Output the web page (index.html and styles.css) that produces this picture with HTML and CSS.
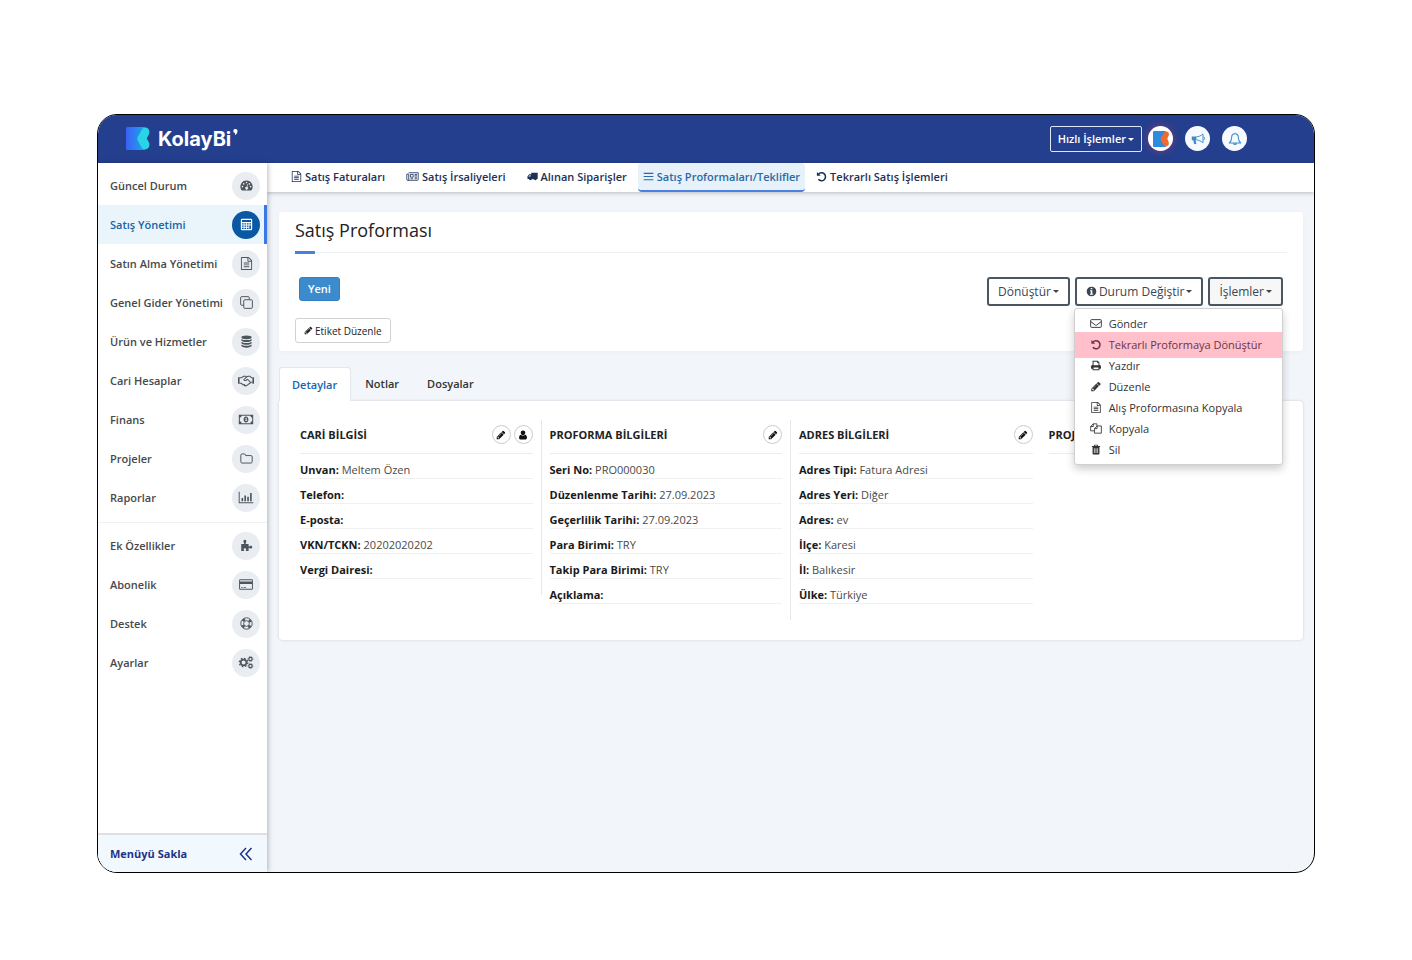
FILE: index.html
```html
<!DOCTYPE html>
<html lang="tr">
<head>
<meta charset="utf-8">
<meta name="viewport" content="width=device-width, initial-scale=1">
<title>KolayBi – Satış Proforması</title>
<link rel="stylesheet" href="styles.css">
</head>
<body>
<svg class="sprite" aria-hidden="true">
  <symbol id="pencil" viewBox="0 0 1792 1792"><path d="M491 1536l91-91-235-235-91 91v107h128v128h107zM1014 608q0-22-22-22-10 0-17 7l-542 542q-7 7-7 17 0 22 22 22 10 0 17-7l542-542q7-7 7-17zM960 416l416 416-832 832h-416v-416zM1643 512q0 53-37 90l-166 166-416-416 166-165q36-38 90-38 53 0 91 38l235 234q37 39 37 91z"/></symbol>
  <symbol id="file" viewBox="0 0 1792 1792"><path d="M1596 380q28 28 48 76t20 88v1152q0 40-28 68t-68 28h-1344q-40 0-68-28t-28-68v-1600q0-40 28-68t68-28h896q40 0 88 20t76 48zM1152 136v376h376q-10-29-22-41l-313-313q-12-12-41-22zM1536 1664v-1024h-416q-40 0-68-28t-28-68v-416h-768v1536h1280zM512 800q0-14 9-23t23-9h704q14 0 23 9t9 23v64q0 14-9 23t-23 9h-704q-14 0-23-9t-9-23v-64zM1248 1024q14 0 23 9t9 23v64q0 14-9 23t-23 9h-704q-14 0-23-9t-9-23v-64q0-14 9-23t23-9h704zM1248 1280q14 0 23 9t9 23v64q0 14-9 23t-23 9h-704q-14 0-23-9t-9-23v-64q0-14 9-23t23-9h704z"/></symbol>
  <symbol id="gauge" viewBox="0 0 16 16"><path fill-rule="evenodd" d="M8 2a7.500 7.500 0 0 0-6.300 11.600c.2.3.4.4.7.4h11.200c.3 0 .5-.1.7-.4A7.500 7.500 0 0 0 8 2zM3 8.400a1 1 0 1 1 0 2 1 1 0 0 1 0-2zM4.500 5a1 1 0 1 1 0 2 1 1 0 0 1 0-2zM8 3.400a1 1 0 1 1 0 2 1 1 0 0 1 0-2zM11.500 5a1 1 0 1 1 0 2 1 1 0 0 1 0-2zM13 8.400a1 1 0 1 1 0 2 1 1 0 0 1 0-2zM9.200 6l.7.200-.9 3.600a1.700 1.700 0 1 1-.8-.200z"/></symbol>
  <symbol id="calc" viewBox="0 0 16 16"><path fill-rule="evenodd" d="M2.500 1h11A1.500 1.500 0 0 1 15 2.500v11a1.500 1.500 0 0 1-1.500 1.500h-11A1.500 1.500 0 0 1 1 13.500v-11A1.500 1.500 0 0 1 2.500 1zM2.500 2.500v2.500h11V2.500zM2.500 6.500v1.600h2V6.500zM5.500 6.500v1.600h2V6.500zM8.500 6.500v1.600h2V6.500zM11.500 6.500v1.600h2V6.500zM2.500 9.200v1.600h2V9.200zM5.500 9.200v1.600h2V9.200zM8.500 9.200v1.600h2V9.200zM2.500 12v1.600h2V12zM5.500 12v1.600h2V12zM8.500 12v1.600h2V12zM11.500 9.200v4.400h2V9.200z"/></symbol>
  <symbol id="clone" viewBox="0 0 16 16"><g fill="none" stroke="currentColor" stroke-width="1.200"><rect x="4.600" y="4.600" width="10.600" height="10.600" rx="1.200"/><path d="M4.600 11.400H2A1.200 1.200 0 0 1 .8 10.200V2A1.200 1.200 0 0 1 2 .8h8.200A1.200 1.200 0 0 1 11.400 2v2.600"/></g></symbol>
  <symbol id="database" viewBox="0 0 16 16"><ellipse cx="8" cy="2.900" rx="6.300" ry="2.400"/><path d="M1.700 4.800c2 2 10.600 2 12.600 0v1.700c0 3-12.600 3-12.600 0zM1.700 8.200c2 2 10.600 2 12.600 0v1.700c0 3-12.600 3-12.600 0zM1.700 11.600c2 2 10.600 2 12.600 0v1.700c0 3-12.600 3-12.600 0z"/></symbol>
  <symbol id="shake" viewBox="0 0 20 16"><path d="M0 4h2v8H0zM18 4h2v8h-2z"/><path fill="none" stroke="currentColor" stroke-width="1.300" stroke-linejoin="round" d="M2 4.500h2.500L7 2.700h2.500L11 3.500l1.500-.8H15l1.800 1.800H18M2 11.500h1.700l4.800 3 1.800.2 5.700-4.200 2-.5M11 3.500L7.300 6.800c.5 1.800 2.300 1.500 3.700.3l1-.6 4 4M9 14.200l-1.300-1.200"/></symbol>
  <symbol id="money" viewBox="0 0 20 16"><path fill-rule="evenodd" d="M1 2h18v12H1zM4.500 3.300a2.500 2.500 0 0 1-2.200 2.400v4.600a2.500 2.500 0 0 1 2.200 2.400h11a2.500 2.500 0 0 1 2.200-2.400V5.700a2.500 2.500 0 0 1-2.200-2.400zM10 4.300c2 0 3 1.700 3 3.700s-1 3.700-3 3.700S7 10 7 8s1-3.700 3-3.700zM9 6.800l.6.500v1.900h-.9v.8h2.800v-.8h-.8V5.900h-.6z"/></symbol>
  <symbol id="folder" viewBox="0 0 16 16"><path fill="none" stroke="currentColor" stroke-width="1.200" d="M1 4a1.600 1.600 0 0 1 1.600-1.600h2.600A1.600 1.600 0 0 1 6.800 4v.4h6.600A1.600 1.600 0 0 1 15 6v6a1.600 1.600 0 0 1-1.600 1.600H2.600A1.600 1.600 0 0 1 1 12z"/></symbol>
  <symbol id="chart" viewBox="0 0 18 16"><path d="M0 1h1.200v12.800H18V15H0zM3.500 8.500h2v4h-2zM7 5.500h2v7H7zM10.500 7h2v5.500h-2zM14 2.500h2v10h-2z"/></symbol>
  <symbol id="puzzle" viewBox="0 0 16 16"><path d="M1.500 6h3.200c.6 0 .5-.8.100-1.300C3.500 3 4.300 1 6 1s2.500 2 1.200 3.700c-.4.500-.3 1.300.3 1.300h3.100v2.800c0 .6.700.6 1.300.100 1.300-1 3.100-.4 3.100 1.200s-1.800 2.200-3.100 1.200c-.6-.5-1.300-.4-1.300.2v3.200H7.600c-.6 0-.6-.7-.2-1.200.7-1 .1-2-1.300-2s-2 1-1.300 2c.4.500.4 1.200-.3 1.200h-3z"/></symbol>
  <symbol id="card" viewBox="0 0 18 16"><path fill-rule="evenodd" d="M2 1.500h14A1.500 1.500 0 0 1 17.500 3v10a1.500 1.500 0 0 1-1.500 1.500H2A1.500 1.500 0 0 1 .5 13V3A1.500 1.500 0 0 1 2 1.500zM1.700 2.700v1.600h14.600V2.700zM1.700 7.500v5.800h14.600V7.500zM3 11h2v1H3zM6 11h3v1H6z"/></symbol>
  <symbol id="ring" viewBox="0 0 16 16"><g fill="none" stroke="currentColor"><circle cx="8" cy="8" r="7" stroke-width="1.200"/><circle cx="8" cy="8" r="3.500" stroke-width="1.200"/><circle cx="8" cy="8" r="5.300" stroke-width="3" stroke-dasharray="3.300 5.030" stroke-dashoffset="-2.500"/></g></symbol>
  <symbol id="gears" viewBox="0 0 18 16"><g fill="none" stroke="currentColor"><circle cx="6" cy="8" r="3.500" stroke-width="2"/><circle cx="6" cy="8" r="5.200" stroke-width="1.600" stroke-dasharray="2 2.080"/><circle cx="14.500" cy="3.700" r="2" stroke-width="1.400"/><circle cx="14.500" cy="3.700" r="3" stroke-width="1" stroke-dasharray="1.200 1.156"/><circle cx="14.500" cy="12.300" r="2" stroke-width="1.400"/><circle cx="14.500" cy="12.300" r="3" stroke-width="1" stroke-dasharray="1.200 1.156"/></g></symbol>
  <symbol id="news" viewBox="0 0 18 16"><path fill="none" stroke="currentColor" stroke-width="1.200" d="M3.500 2.500h13.800v10a1 1 0 0 1-1 1H2a1.300 1.300 0 0 1-1.300-1.300V4.500h2.800v7.700A1.300 1.300 0 0 1 2 13.500"/><path fill="none" stroke="currentColor" stroke-width="1.200" d="M6 5h4v4H6zM12 5h3.500M12 7h3.500M12 9h3.500M6 11.300h4M12 11.300h3.500"/></symbol>
  <symbol id="truck" viewBox="0 0 18 16"><path fill-rule="evenodd" d="M7 2h10.500v10H16a2.200 2.200 0 0 1-4.300.4H7.500A2.200 2.200 0 0 1 3.200 12H.8V7.500L3.600 4.500H7zM2.200 8H5.800V5.800H4.200z"/></symbol>
  <symbol id="bars" viewBox="0 0 16 16"><path d="M1 2.500h14v1.700H1zM1 7.200h14v1.700H1zM1 11.900h14v1.700H1z"/></symbol>
  <symbol id="undo" viewBox="0 0 16 16"><path fill="none" stroke="currentColor" stroke-width="2.200" d="M3.600 4.600A5.800 5.800 0 1 1 3.500 12"/><path d="M1.300 1.300v5.600h5.600z"/></symbol>
  <symbol id="mail" viewBox="0 0 18 16"><path fill="none" stroke="currentColor" stroke-width="1.400" stroke-linejoin="round" d="M2.200 2.200h13.600A1.200 1.200 0 0 1 17 3.400v9.200a1.200 1.200 0 0 1-1.200 1.200H2.200A1.200 1.200 0 0 1 1 12.600V3.400a1.200 1.200 0 0 1 1.200-1.200zM1 5l6.500 5c1 .8 2 .8 3 0L17 5"/></symbol>
  <symbol id="print" viewBox="0 0 16 16"><path fill-rule="evenodd" d="M3 1h7.500L13 3.500v3.600c1.300 0 2.200.9 2.200 2.200v3.500H13V15H3v-2.200H.8V9.300c0-1.300.9-2.200 2.200-2.200zM4.400 2.400v5.400h7.200V4.500H9.700V2.400zM4.400 10.800v2.800h7.200v-2.800z"/></symbol>
  <symbol id="copy" viewBox="0 0 18 16"><path fill="none" stroke="currentColor" stroke-width="1.300" stroke-linejoin="round" d="M6.500 11.500H1V5l3.800-4h5.500v3M5 1v4H1M10.500 4.200H17V15H6.700V8.200zM10.700 4.200v4h-4"/></symbol>
  <symbol id="trash" viewBox="0 0 16 16"><path fill-rule="evenodd" d="M5.500 1h5l.7 2H14v1.500h-1V14a1.200 1.200 0 0 1-1.200 1.200H4.200A1.200 1.200 0 0 1 3 14V4.500H2V3h2.800zM6.300 2.200L6 3h4l-.3-.8zM5 6v7h1V6zM7.500 6v7h1V6zM10 6v7h1V6z"/></symbol>
  <symbol id="user" viewBox="0 0 16 16"><circle cx="8" cy="4.500" r="3.700"/><path d="M4.600 7.500c2 1.800 4.800 1.800 6.800 0 2 .3 2.900 2.500 2.900 5 0 1.500-.8 2.500-2 2.500H3.700c-1.200 0-2-1-2-2.500 0-2.500.9-4.700 2.900-5z"/></symbol>
  <symbol id="info" viewBox="0 0 16 16"><path fill-rule="evenodd" d="M8 1a7 7 0 1 1 0 14A7 7 0 0 1 8 1zM6.900 2.800v2h2.300v-2zM5.800 6v1.500h1.100v3.700H5.800v1.500h4.600v-1.500H9.200V6z"/></symbol>
  <symbol id="horn" viewBox="0 0 18 16"><path d="M1 4.700h6v5H5.900l1 4.300c-1 .8-2.200.8-3 .2L3 9.700H1z"/><path fill="none" stroke="currentColor" stroke-width="1.200" stroke-linejoin="round" d="M7 5.200c3 0 6-1.500 8.400-3.700v11.400C13 10.700 10 9.300 7 9.200M16 5.500a1.700 1.700 0 0 1 0 3.400"/></symbol>
  <symbol id="bell" viewBox="0 0 16 16"><path fill="none" stroke="currentColor" stroke-width="1.200" stroke-linejoin="round" d="M8 2C5.500 2 4.200 4 4.200 6c0 3.500-1 5.200-2.700 6.500h13C12.800 11.200 11.800 9.500 11.800 6c0-2-1.300-4-3.800-4zM8 2V.8M6.500 12.800c0 2 3 2 3 0"/></symbol>
  <symbol id="chevrons" viewBox="0 0 14 14"><path fill="none" stroke="currentColor" stroke-width="1.500" d="M7 1L1.500 7 7 13M12.500 1L7 7l5.500 6"/></symbol>
</svg>

<div class="app">
  <header class="topbar">
    <a class="brand" href="#">
      <svg class="brand-mark" viewBox="0 0 24 23" aria-hidden="true">
        <defs><linearGradient id="markFill"><stop offset="0" stop-color="#3d60f4"/><stop offset="1" stop-color="#1ca6ee"/></linearGradient></defs>
        <path fill="url(#markFill)" d="M1.500 0H19l-7 11.500L19 23H1.500A1.500 1.500 0 0 1 0 21.500v-20A1.500 1.500 0 0 1 1.500 0z"/>
        <path fill="#2bd3e6" d="M19 .5c3.800 0 5.200 3.500 4 6.500-.4 1.300-1.500 3-2.300 4.500.8 1.300 1.900 2.800 2.400 4.200 1.100 3.500-.6 6.800-4.100 6.800-2 0-2.800-1-3.800-2.800l-3.200-5.700c-1-1.600-1-2.800 0-4.400l3.400-6C16.400 1.300 17.400.5 19 .5z"/>
      </svg>
      <span class="brand-name">KolayBi</span><svg class="brand-tick" viewBox="0 0 5 6" aria-hidden="true"><path fill="#fff" d="M2.500 0a2 2 0 0 1 2 2.200C4.400 4 3.300 5.500 1.800 6l.3-2A2 2 0 0 1 2.500 0z"/></svg>
    </a>
    <div class="top-actions">
      <button class="quick" type="button">Hızlı İşlemler<span class="caret"></span></button>
      <button class="round round-brand" type="button" aria-label="Hesap"><svg viewBox="0 0 16 16"><path fill="#2d8be0" d="M1 0h12L9 8l4 8H1a1 1 0 0 1-1-1V1a1 1 0 0 1 1-1z"/><path fill="#f26a2e" d="M13 .5c3 0 3.500 2.500 2.500 4.500L14.300 7.800l1.200 2.700c1 2.500-.2 5-2.500 5-1.500 0-2-1-2.500-2L8 9.500c-.7-1-.7-2 0-3l2.500-4C11 1.500 11.500.5 13 .5z"/></svg></button>
      <button class="round" type="button" aria-label="Duyurular"><svg><use href="#horn"/></svg></button>
      <button class="round" type="button" aria-label="Bildirimler"><svg><use href="#bell"/></svg></button>
    </div>
  </header>

  <div class="body">
    <aside class="sidebar">
      <nav class="menu">
        <a class="item" href="#">Güncel Durum<span class="bubble"><svg><use href="#gauge"/></svg></span></a>
        <a class="item item-active" href="#">Satış Yönetimi<span class="bubble"><svg><use href="#calc"/></svg></span></a>
        <a class="item" href="#">Satın Alma Yönetimi<span class="bubble"><svg><use href="#file"/></svg></span></a>
        <a class="item" href="#">Genel Gider Yönetimi<span class="bubble"><svg><use href="#clone"/></svg></span></a>
        <a class="item" href="#">Ürün ve Hizmetler<span class="bubble"><svg><use href="#database"/></svg></span></a>
        <a class="item" href="#">Cari Hesaplar<span class="bubble"><svg class="wide"><use href="#shake"/></svg></span></a>
        <a class="item" href="#">Finans<span class="bubble"><svg class="wide"><use href="#money"/></svg></span></a>
        <a class="item" href="#">Projeler<span class="bubble"><svg><use href="#folder"/></svg></span></a>
        <a class="item" href="#">Raporlar<span class="bubble"><svg class="wide"><use href="#chart"/></svg></span></a>
      </nav>
      <nav class="menu menu-extra">
        <a class="item" href="#">Ek Özellikler<span class="bubble"><svg><use href="#puzzle"/></svg></span></a>
        <a class="item" href="#">Abonelik<span class="bubble"><svg class="wide"><use href="#card"/></svg></span></a>
        <a class="item" href="#">Destek<span class="bubble"><svg><use href="#ring"/></svg></span></a>
        <a class="item" href="#">Ayarlar<span class="bubble"><svg class="wide"><use href="#gears"/></svg></span></a>
      </nav>
      <button class="collapse" type="button">Menüyü Sakla<svg><use href="#chevrons"/></svg></button>
    </aside>

    <div class="main">
      <nav class="subnav">
        <a class="sub sub-spaced" href="#"><svg><use href="#file"/></svg>Satış Faturaları</a>
        <a class="sub sub-spaced" href="#"><svg class="wide"><use href="#news"/></svg>Satış İrsaliyeleri</a>
        <a class="sub" href="#"><svg><use href="#truck"/></svg>Alınan Siparişler</a>
        <a class="sub sub-active" href="#"><svg><use href="#bars"/></svg>Satış Proformaları/Teklifler</a>
        <a class="sub" href="#"><svg><use href="#undo"/></svg>Tekrarlı Satış İşlemleri</a>
      </nav>

      <main class="content">
        <section class="card">
          <h1 class="title">Satış Proforması</h1>
          <div class="toolbar">
            <div class="tags">
              <button class="status" type="button">Yeni</button>
              <button class="tag-edit" type="button"><svg><use href="#pencil"/></svg>Etiket Düzenle</button>
            </div>
            <div class="actions">
              <button class="action" type="button">Dönüştür<span class="caret"></span></button>
              <button class="action" type="button"><svg><use href="#info"/></svg>Durum Değiştir<span class="caret"></span></button>
              <div class="dropdown">
                <button class="action action-open" type="button" aria-expanded="true">İşlemler<span class="caret"></span></button>
                <div class="dropdown-menu">
                  <a class="option" href="#"><svg><use href="#mail"/></svg>Gönder</a>
                  <a class="option option-marked" href="#"><svg><use href="#undo"/></svg>Tekrarlı Proformaya Dönüştür</a>
                  <a class="option" href="#"><svg><use href="#print"/></svg>Yazdır</a>
                  <a class="option" href="#"><svg><use href="#pencil"/></svg>Düzenle</a>
                  <a class="option" href="#"><svg><use href="#file"/></svg>Alış Proformasına Kopyala</a>
                  <a class="option" href="#"><svg><use href="#copy"/></svg>Kopyala</a>
                  <a class="option" href="#"><svg><use href="#trash"/></svg>Sil</a>
                </div>
              </div>
            </div>
          </div>
        </section>

        <div class="tabs">
          <button class="tab tab-active" type="button">Detaylar</button>
          <button class="tab" type="button">Notlar</button>
          <button class="tab" type="button">Dosyalar</button>
        </div>
        <section class="panel">
          <div class="column ruled">
            <div class="column-head"><h2>CARİ BİLGİSİ</h2><button class="mini" type="button" aria-label="Düzenle"><svg><use href="#pencil"/></svg></button><button class="mini" type="button" aria-label="Cari"><svg><use href="#user"/></svg></button></div>
            <p class="field"><b>Unvan:</b> Meltem Özen</p>
            <p class="field"><b>Telefon:</b></p>
            <p class="field"><b>E-posta:</b></p>
            <p class="field"><b>VKN/TCKN:</b> 20202020202</p>
            <p class="field"><b>Vergi Dairesi:</b></p>
          </div>
          <div class="column ruled">
            <div class="column-head"><h2>PROFORMA BİLGİLERİ</h2><button class="mini" type="button" aria-label="Düzenle"><svg><use href="#pencil"/></svg></button></div>
            <p class="field"><b>Seri No:</b> PRO000030</p>
            <p class="field"><b>Düzenlenme Tarihi:</b> 27.09.2023</p>
            <p class="field"><b>Geçerlilik Tarihi:</b> 27.09.2023</p>
            <p class="field"><b>Para Birimi:</b> TRY</p>
            <p class="field"><b>Takip Para Birimi:</b> TRY</p>
            <p class="field"><b>Açıklama:</b></p>
          </div>
          <div class="column">
            <div class="column-head"><h2>ADRES BİLGİLERİ</h2><button class="mini" type="button" aria-label="Düzenle"><svg><use href="#pencil"/></svg></button></div>
            <p class="field"><b>Adres Tipi:</b> Fatura Adresi</p>
            <p class="field"><b>Adres Yeri:</b> Diğer</p>
            <p class="field"><b>Adres:</b> ev</p>
            <p class="field"><b>İlçe:</b> Karesi</p>
            <p class="field"><b>İl:</b> Balıkesir</p>
            <p class="field"><b>Ülke:</b> Türkiye</p>
          </div>
          <div class="column">
            <div class="column-head"><h2>PROJE</h2></div>
          </div>
        </section>
      </main>
    </div>
  </div>
</div>
</body>
</html>
```
FILE: styles.css
```css
* { box-sizing: border-box; }
body {
  margin: 0;
  min-height: 100vh;
  padding: 114px 97px 87px;
  display: flex;
  background: #fff;
  color: #333;
  font: 11px/16px "Open Sans", "Noto Sans", sans-serif;
}
a { color: inherit; text-decoration: none; }
button { font: inherit; color: inherit; cursor: pointer; }
h1, h2, p { margin: 0; }
svg { fill: currentColor; flex: none; display: block; }
.sprite { position: absolute; width: 0; height: 0; }

.app {
  flex: 1;
  min-width: 0;
  display: flex;
  flex-direction: column;
  border: 1px solid #000;
  border-radius: 20px;
  overflow: hidden;
  background: #f2f6fb;
}
.caret {
  display: inline-block;
  margin-left: 2px;
  vertical-align: 2px;
  border: 3px solid transparent;
  border-top-color: currentColor;
  border-bottom: 0;
}

.topbar {
  display: flex;
  align-items: center;
  justify-content: space-between;
  height: 48px;
  padding: 0 67px 1px 28px;
  background: #243f8e;
  color: #fff;
}
.brand { display: flex; align-items: center; }
.brand-mark { width: 24px; height: 23px; margin-right: 8px; }
.brand-name { font: 700 20px/24px "Inter", sans-serif; }
.brand-tick { width: 5px; height: 6px; align-self: flex-start; margin: 2px 0 0 2px; }
.top-actions { display: flex; align-items: center; gap: 12px; }
.quick {
  height: 26px;
  margin-right: -6px;
  padding: 0 7px;
  border: 1px solid #dfe6f7;
  border-radius: 2px;
  background: none;
  font-weight: 600;
}
.round {
  display: grid;
  place-items: center;
  width: 25px;
  height: 25px;
  padding: 0;
  border: 0;
  border-radius: 50%;
  background: #f6f9fd;
  color: #3d8ac9;
}
.round svg { width: 14px; height: 14px; }
.round-brand { background: #fff; box-shadow: 0 0 5px 3px rgba(150, 60, 110, .35); }
.round-brand svg { width: 16px; height: 16px; }

.body { flex: 1; display: flex; }
.sidebar {
  position: relative;
  z-index: 1;
  width: 169px;
  flex: none;
  display: flex;
  flex-direction: column;
  background: #fff;
  box-shadow: 1px 0 5px rgba(0, 0, 0, .28);
}
.menu { padding: 3px 0 5px; }
.menu-extra { border-top: 1px solid #f0f1f3; }
.item {
  display: flex;
  align-items: center;
  justify-content: space-between;
  height: 39px;
  padding: 0 7px 0 12px;
  font-weight: 600;
  color: #45494d;
}
.item-active {
  padding-right: 4px;
  border-right: 3px solid #3b78e7;
  background: #e9f4fb;
  color: #1565a8;
}
.bubble {
  display: grid;
  place-items: center;
  width: 28px;
  height: 28px;
  border-radius: 50%;
  background: #e9edf2;
  color: #4c545c;
}
.bubble svg { width: 13px; height: 13px; }
.bubble .wide { width: 16px; }
.item-active .bubble { background: #0a57a3; color: #fff; }
.collapse {
  display: flex;
  align-items: center;
  justify-content: space-between;
  height: 39px;
  margin-top: auto;
  padding: 0 14px 0 12px;
  border: 0;
  border-top: 2px solid #dcdfe3;
  background: #f2f9fe;
  color: #1f3486;
  font-weight: 700;
}
.collapse svg { width: 14px; height: 14px; }

.main { flex: 1; min-width: 0; }
.subnav {
  display: flex;
  gap: 6px;
  height: 29px;
  padding-left: 19px;
  background: #fff;
  box-shadow: 0 1px 4px rgba(0, 0, 0, .25);
}
.sub {
  display: flex;
  align-items: center;
  gap: 3px;
  padding: 0 5px;
  border-bottom: 2px solid transparent;
  border-radius: 4px;
  font-weight: 600;
  color: #1c3158;
  white-space: nowrap;
}
.sub-spaced { margin-right: 5px; }
.sub svg { width: 11px; height: 11px; }
.sub .wide { width: 13px; }
.sub-active { background: #e6f1f9; color: #2b69a6; border-bottom-color: #4a80e0; }

.content { padding: 20px 11px 0 12px; }
.card {
  padding: 7px 16px 8px;
  border-radius: 4px;
  background: #fff;
  box-shadow: 0 1px 4px rgba(0, 0, 0, .04);
}
.title {
  display: flex;
  flex-direction: column;
  border-bottom: 1px solid #f0f1f3;
  font-size: 18px;
  line-height: 22px;
  font-weight: 500;
  color: #222;
}
.title::after {
  content: "";
  width: 20px;
  height: 3px;
  margin: 10px 0 -2px;
  background: #4a7fe2;
}
.toolbar { display: flex; justify-content: space-between; padding-top: 24px; }
.tags { display: flex; flex-direction: column; align-items: flex-start; gap: 17px; }
.status {
  height: 24px;
  margin-left: 4px;
  padding: 0 8px;
  border: 1px solid #337fc0;
  border-radius: 3px;
  background: #3c8bcd;
  color: #fff;
  font-weight: 600;
}
.tag-edit {
  display: flex;
  align-items: center;
  gap: 2px;
  height: 25px;
  padding: 0 8px;
  border: 1px solid #d2d2d2;
  border-radius: 3px;
  background: #fff;
  font-size: 10px;
  font-weight: 500;
  color: #222;
}
.tag-edit svg { width: 9px; height: 9px; }
.actions { display: flex; align-items: flex-start; gap: 5px; padding-right: 4px; }
.action {
  display: flex;
  align-items: center;
  height: 29px;
  padding: 0 9px;
  border: 2px solid #4a5763;
  border-radius: 3px;
  background: #fff;
  font-size: 12px;
  color: #3a4651;
}
.action svg { width: 11px; height: 11px; margin-right: 2px; }
.action-open { background: #f7f7f7; }
.dropdown { position: relative; }
.dropdown-menu {
  position: absolute;
  z-index: 2;
  top: 31px;
  right: 0;
  padding: 4px 0;
  border: 1px solid #d0d0d0;
  border-radius: 3px;
  background: #fff;
  box-shadow: 0 4px 8px rgba(0, 0, 0, .2);
}
.option {
  position: relative;
  display: flex;
  align-items: center;
  gap: 7px;
  height: 21px;
  padding: 0 20px 0 15px;
  font-weight: 500;
  white-space: nowrap;
}
.option svg { width: 12px; height: 11px; }
.option-marked { color: #6b3542; }
.option-marked::before {
  content: "";
  position: absolute;
  z-index: -1;
  inset: -2px 0 -3px;
  background: #ffc0cb;
}

.tabs { display: flex; margin-top: 16px; }
.tab {
  height: 34px;
  padding: 0 14px;
  border: 0;
  background: none;
  font-weight: 600;
}
.tab-active {
  padding: 0 13px 0 12px;
  border: 1px solid #e3e6ea;
  border-bottom: 0;
  border-radius: 3px 3px 0 0;
  background: #fff;
  color: #1465b4;
}
.panel {
  display: grid;
  grid-template-columns: repeat(4, 1fr);
  align-items: start;
  padding: 19px 13px 20px;
  border-radius: 0 4px 4px 4px;
  background: #fff;
  box-shadow: 0 0 3px rgba(0, 0, 0, .16);
}
.column { min-width: 0; padding: 0 8px 16px; }
.ruled { border-right: 1px solid #e8e8e8; }
.column-head {
  display: flex;
  align-items: center;
  gap: 3px;
  height: 34px;
  padding-bottom: 4px;
  border-bottom: 1px solid #ececec;
}
.column-head h2 { flex: 1; font-size: 11px; line-height: 16px; font-weight: 700; color: #222; }
.mini {
  display: grid;
  place-items: center;
  width: 19px;
  height: 19px;
  padding: 0;
  border: 1px solid #ccc;
  border-radius: 50%;
  background: #fff;
  color: #111;
}
.mini svg { width: 10px; height: 10px; }
.field {
  height: 25px;
  padding-top: 8px;
  border-bottom: 1px solid #f0f0f0;
  color: #4a4a4a;
}
.field b { color: #1a1a1a; }
```
